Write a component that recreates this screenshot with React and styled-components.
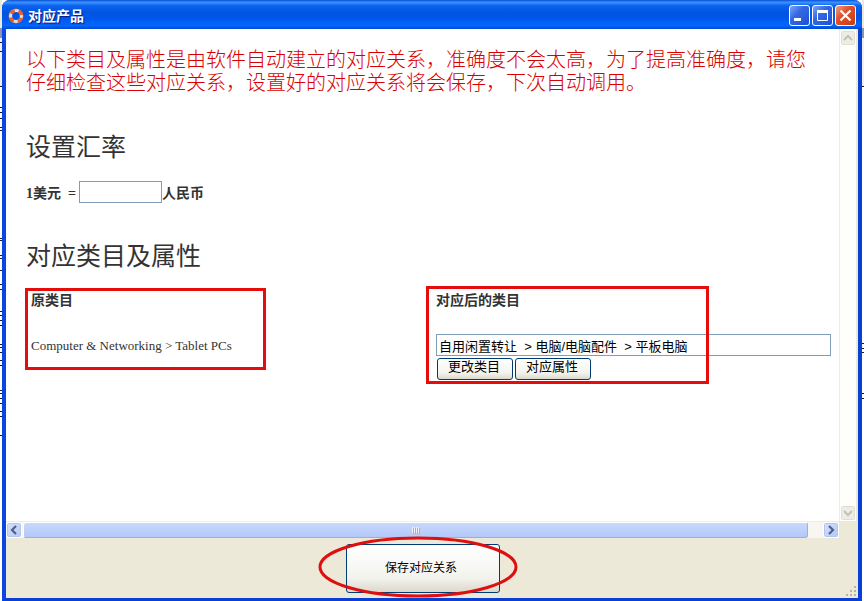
import React, { useState } from "react";
import styled, { createGlobalStyle, css } from "styled-components";

const GlobalStyle = createGlobalStyle`
  * {
    box-sizing: border-box;
  }
  body {
    margin: 0;
    color: #333;
    font-family: "Liberation Serif", "Noto Sans CJK SC", serif;
  }
  button,
  input {
    font-family: "Liberation Sans", "Noto Sans CJK SC", sans-serif;
  }
`;

const Desktop = styled.div`
  display: flex;
  min-height: 100vh;
  background-color: #fff;
`;

const Edge = styled.svg`
  flex: none;
  width: 2px;
  height: 100vh;
`;

const Window = styled.main`
  flex: 1;
  min-width: 0;
  display: flex;
  flex-direction: column;
  border: solid #0a3fd6;
  border-width: 0 4px 3px;
  border-left-color: #0c45e0;
  border-radius: 8px 8px 0 0;
  background-color: #ece9d8;
`;

const TitleBar = styled.header`
  display: flex;
  align-items: center;
  gap: 4px;
  height: 29px;
  margin: 0 -4px;
  padding: 2px 6px 0;
  border-radius: 8px 8px 0 0;
  background: linear-gradient(
    #0a4fd8 0%,
    #3a93ff 8%,
    #0a62ee 20%,
    #0054e3 45%,
    #0058ea 65%,
    #0066ff 88%,
    #0047cf 100%
  );
`;

const Title = styled.h1`
  flex: 1;
  margin: 0;
  color: #fff;
  font-family: "Liberation Sans", "Noto Sans CJK SC", sans-serif;
  font-size: 14px;
  line-height: 20px;
  text-shadow: 1px 1px 1px #0a1883;
`;

const WindowButtons = styled.div`
  display: flex;
  gap: 2px;
`;

const WindowButton = styled.button`
  width: 21px;
  height: 21px;
  padding: 0;
  border: 1px solid #fff;
  border-radius: 3px;
  background: ${({ $close }) =>
    $close
      ? "linear-gradient(135deg, #f0a088, #e0502c 40%, #c83c10)"
      : "linear-gradient(135deg, #7fa4f4, #3468e2 40%, #1c50d4)"};

  svg {
    display: block;
  }
`;

const View = styled.div`
  flex: 1;
  display: flex;
  min-height: 0;
  padding-right: 2px;
`;

const Page = styled.section`
  flex: 1;
  min-width: 0;
  padding: 20px 3px 0 20px;
  background-color: #fff;
`;

const Notice = styled.p`
  margin: 0;
  padding-right: 24px;
  color: #d80000;
  font-size: 20px;
  font-weight: 300;
  line-height: 23px;
`;

const Heading = styled.h2`
  margin: 37px 0 0;
  font-size: 25px;
  font-weight: 400;
  line-height: 32px;
`;

const RateRow = styled.div`
  display: flex;
  align-items: center;
  height: 22px;
  margin: 17px 0 38px;
  font-size: 14px;
  font-weight: 700;
`;

const RateLabel = styled.label`
  white-space: pre;
`;

const field = css`
  height: 22px;
  border: 1px solid #7f9db9;
  border-radius: 0;
  background-color: #fff;
  color: #000;
  font-size: 13px;
`;

const RateInput = styled.input`
  ${field}
  width: 83px;
  margin-left: 3px;
`;

const Table = styled.table`
  width: 100%;
  margin-top: 15px;
  border-collapse: collapse;
  table-layout: fixed;
`;

const HeadCell = styled.th`
  position: relative;
  padding: 2px 5px 22px;
  font-size: 14px;
  line-height: 22px;
  text-align: left;
`;

const Cell = styled.td`
  padding: 0 5px;
  font-size: 13px;
  line-height: 24px;
  vertical-align: top;
`;

const CategoryInput = styled.input`
  ${field}
  display: block;
  width: 100%;
  padding: 0 2px;
`;

const Actions = styled.div`
  display: flex;
  gap: 2px;
  padding: 2px 1px 0;
`;

const xpButton = css`
  padding: 0;
  border: 1px solid #003c74;
  border-radius: 3px;
  background: linear-gradient(#fff, #f3f3ee 70%, #dcd8cc);
  color: #000;
`;

const ActionButton = styled.button`
  ${xpButton}
  width: 76px;
  height: 22px;
  padding: 0 2px 4px 0;
  font-size: 13px;
  line-height: 16px;
`;

// red frame drawn over the table
const Frame = styled.span`
  position: absolute;
  top: ${({ $top }) => $top}px;
  left: ${({ $left }) => $left}px;
  width: ${({ $width }) => $width}px;
  height: ${({ $height }) => $height}px;
  border: 3px solid #e60c0c;
  pointer-events: none;
`;

const VerticalBar = styled.div`
  display: flex;
  flex-direction: column;
  justify-content: space-between;
  width: 17px;
  padding: 1px 0 0;
  border-left: 1px solid #eeede5;
  background-color: #fefefb;
`;

const HorizontalBar = styled.div`
  display: flex;
  height: 17px;
  margin-right: 19px;
  border-top: 1px solid #eeede5;
  background-color: #f7f6f0;
`;

const ScrollButton = styled.button`
  flex: none;
  width: 16px;
  height: 16px;
  padding: 0;
  border: 1px solid #fff;
  border-radius: 3px;
  background: ${({ disabled }) =>
    disabled ? "#eeede5" : "linear-gradient(135deg, #d5e1fd, #b4c8f6)"};
  box-shadow: 0 0 0 1px ${({ disabled }) => (disabled ? "#e0dfd2" : "#b3c6ee")} inset;

  svg {
    display: block;
    margin: auto;
  }
`;

const Thumb = styled.div`
  flex: 1;
  display: flex;
  align-items: center;
  justify-content: center;
  gap: 1px;
  margin: 0 15px 0 1px;
  border: 1px solid #fff;
  border-right-color: #98b0e0;
  border-bottom-color: #98b0e0;
  border-radius: 3px;
  background: linear-gradient(#c9d7fc, #bccffb 60%, #b3c8f8);
`;

const Grip = styled.i`
  width: 1px;
  height: 6px;
  background-color: #eef4fe;
  box-shadow: 1px 1px 0 #8cb0f8;
`;

const Footer = styled.footer`
  position: relative;
  display: flex;
  justify-content: center;
  padding: 6px 18px 5px 0;
`;

const SaveWrap = styled.div`
  position: relative;
`;

const SaveButton = styled.button`
  ${xpButton}
  width: 154px;
  height: 49px;
  padding: 0 4px 4px 0;
  font-size: 12px;
`;

const Ring = styled.svg`
  position: absolute;
  top: -8px;
  left: -28px;
  pointer-events: none;
`;

const SizeGrip = styled.svg`
  position: absolute;
  right: 1px;
  bottom: 1px;
`;

const Arrow = ({ d, color }) => (
  <svg width="12" height="12" viewBox="0 0 12 12" aria-hidden="true">
    <path d={d} fill="none" stroke={color} strokeWidth="2.2" />
  </svg>
);

const Lifebuoy = () => (
  <svg width="16" height="16" viewBox="0 0 16 16" aria-hidden="true">
    <circle cx="8" cy="8" r="5.6" fill="none" stroke="#dfe2ee" strokeWidth="3.4" />
    <circle
      cx="8"
      cy="8"
      r="5.6"
      fill="none"
      stroke="#e8642c"
      strokeWidth="3.4"
      strokeDasharray="4.8 3.997"
      strokeDashoffset="-2"
    />
    <circle cx="8" cy="8" r="7.3" fill="none" stroke="#a44a2a" strokeWidth="0.5" />
  </svg>
);

const LEFT_MARKS = [
  42, 51, 107, 112, 118, 127, 130, 238, 240, 255, 258, 270, 284, 289, 311, 315, 320, 325, 344,
  347, 352, 360, 365, 390, 393, 398, 403, 411, 416, 435,
];
const RIGHT_MARKS = [343, 348, 352, 393, 398];

const Backdrop = ({ marks }) => (
  <Edge aria-hidden="true">
    <rect width="2" height="28" fill="#ece9d8" />
    <rect y="28" width="2" height="10" fill="#8796b4" />
    <rect y="38" width="2" height="48" fill="#f0f0ee" />
    <rect y="86" width="2" height="1" fill="#111" />
    {marks.map((y) => (
      <rect key={y} y={y} width="2" height="1" fill="#16162e" />
    ))}
  </Edge>
);

const App = () => {
  const [rate, setRate] = useState("");
  const [category, setCategory] = useState(
    "自用闲置转让\u00a0 > 电脑/电脑配件\u00a0 > 平板电脑"
  );

  return (
    <>
      <GlobalStyle />
      <Desktop>
        <Backdrop marks={LEFT_MARKS} />
        <Window>
          <TitleBar>
            <Lifebuoy />
            <Title>对应产品</Title>
            <WindowButtons>
              <WindowButton aria-label="最小化">
                <svg width="19" height="19">
                  <path d="M4 13.5h7" stroke="#fff" strokeWidth="3" />
                </svg>
              </WindowButton>
              <WindowButton aria-label="最大化">
                <svg width="19" height="19" fill="none" stroke="#fff">
                  <path d="M4.5 5v9.5h10V5" />
                  <path d="M4 5.5h11" strokeWidth="3" />
                </svg>
              </WindowButton>
              <WindowButton $close aria-label="关闭">
                <svg width="19" height="19">
                  <path d="M4.5 4.5l10 10M14.5 4.5l-10 10" stroke="#fff" strokeWidth="2.2" />
                </svg>
              </WindowButton>
            </WindowButtons>
          </TitleBar>

          <View>
            <Page>
              <Notice>
                以下类目及属性是由软件自动建立的对应关系，准确度不会太高，为了提高准确度，请您仔细检查这些对应关系，设置好的对应关系将会保存，下次自动调用。
              </Notice>

              <Heading>设置汇率</Heading>
              <RateRow>
                <RateLabel htmlFor="rate">{"1美元  ="}</RateLabel>
                <RateInput id="rate" value={rate} onChange={(e) => setRate(e.target.value)} />
                <span>人民币</span>
              </RateRow>

              <Heading>对应类目及属性</Heading>
              <Table>
                <thead>
                  <tr>
                    <HeadCell scope="col">
                      原类目
                      <Frame $top={0} $left={-1} $width={241} $height={82} />
                    </HeadCell>
                    <HeadCell scope="col">
                      <label htmlFor="category">对应后的类目</label>
                      <Frame $top={-2} $left={-5} $width={283} $height={98} />
                    </HeadCell>
                  </tr>
                </thead>
                <tbody>
                  <tr>
                    <Cell>Computer &amp; Networking &gt; Tablet PCs</Cell>
                    <Cell>
                      <CategoryInput
                        id="category"
                        value={category}
                        onChange={(e) => setCategory(e.target.value)}
                      />
                      <Actions>
                        <ActionButton>更改类目</ActionButton>
                        <ActionButton>对应属性</ActionButton>
                      </Actions>
                    </Cell>
                  </tr>
                </tbody>
              </Table>
            </Page>
            <VerticalBar>
              <ScrollButton disabled aria-label="向上滚动">
                <Arrow d="M2 8l4-4 4 4" color="#c3c2b6" />
              </ScrollButton>
              <ScrollButton disabled aria-label="向下滚动">
                <Arrow d="M2 4l4 4 4-4" color="#c3c2b6" />
              </ScrollButton>
            </VerticalBar>
          </View>

          <HorizontalBar>
            <ScrollButton aria-label="向左滚动">
              <Arrow d="M8 2L4 6l4 4" color="#4d6185" />
            </ScrollButton>
            <Thumb>
              <Grip />
              <Grip />
              <Grip />
              <Grip />
            </Thumb>
            <ScrollButton aria-label="向右滚动">
              <Arrow d="M4 2l4 4-4 4" color="#4d6185" />
            </ScrollButton>
          </HorizontalBar>

          <Footer>
            <SaveWrap>
              <SaveButton>保存对应关系</SaveButton>
              <Ring width="200" height="62" aria-hidden="true">
                <ellipse
                  cx="100"
                  cy="31"
                  rx="98"
                  ry="29"
                  fill="none"
                  stroke="#dd0f0f"
                  strokeWidth="3"
                />
              </Ring>
            </SaveWrap>
            <SizeGrip width="12" height="12" fill="#b8b4a2" aria-hidden="true">
              <path d="M9 1h2v2h-2zM5 5h2v2h-2zM9 5h2v2h-2zM1 9h2v2h-2zM5 9h2v2h-2zM9 9h2v2h-2z" />
            </SizeGrip>
          </Footer>
        </Window>
        <Backdrop marks={RIGHT_MARKS} />
      </Desktop>
    </>
  );
};

export default App;
